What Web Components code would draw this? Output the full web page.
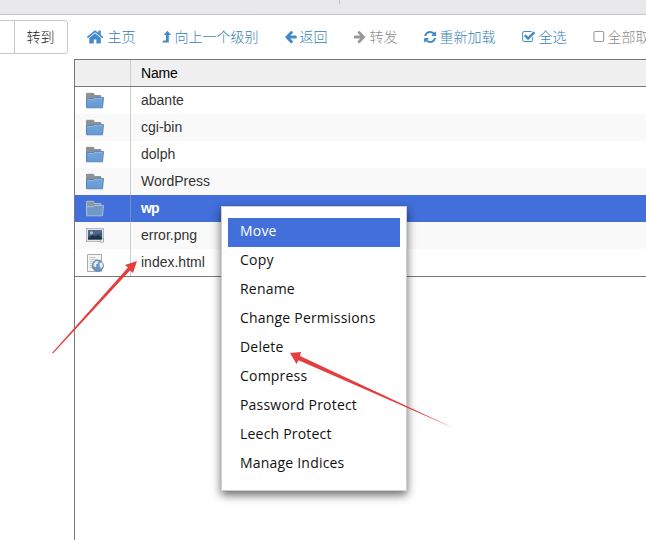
<!DOCTYPE html>
<html lang="zh-CN">
<head>
<meta charset="utf-8">
<title>File Manager</title>
<style>
html,body{margin:0;height:100%;overflow:hidden;background:#fff}
body{font-family:"Liberation Sans",Arial,"Noto Sans CJK SC",sans-serif;font-size:14px}
</style>
</head>
<body>
<file-manager></file-manager>
<script>
const define=(name,html,setup)=>customElements.define(name,class extends HTMLElement{
  connectedCallback(){
    if(this.shadowRoot)return;
    const t=document.createElement('template');
    t.innerHTML=html;
    this.attachShadow({mode:'open'}).append(t.content.cloneNode(true));
    if(setup)setup(this,this.shadowRoot);
  }
});
const fa=(d,w=14,view='0 0 1792 1792')=>`<svg width="${w}" height="${w}" viewBox="${view}"><path fill="currentColor" d="${d}"/></svg>`;
const icons={
home:fa('M1408 992v480q0 26-19 45t-45 19h-384v-384h-256v384h-384q-26 0-45-19t-19-45v-480q0-1 .5-3t.5-3l575-474 575 474q1 2 1 6zm223-69l-62 74q-8 9-21 11h-3q-13 0-21-7l-692-577-692 577q-12 8-24 7-13-2-21-11l-62-74q-8-10-7-23.5t11-21.5l719-599q32-26 76-26t76 26l244 204v-195q0-14 9-23t23-9h192q14 0 23 9t9 23v408l219 182q10 8 11 21.5t-7 23.5z',18,'30 0 1792 1792'),
up:'<svg width="10" height="14" viewBox="0 0 10 14"><path fill="currentColor" d="M0 12.600 1.500 10.600H4V5H1.700L5.400.8 9.100 5H6.800v7.600z"/></svg>',
back:fa('M1664 896v128q0 53-32.5 90.5t-84.5 37.5h-704l293 294q38 36 38 90t-38 90l-75 76q-37 37-90 37-52 0-91-37l-651-652q-37-37-37-90 0-52 37-91l651-650q38-38 91-38 52 0 90 38l75 74q38 38 38 91t-38 91l-293 293h704q52 0 84.5 37.5t32.5 90.5z',14,'160 50 1792 1792'),
forward:'<svg width="14" height="14" viewBox="160 50 1792 1792"><path fill="currentColor" transform="matrix(-1 0 0 1 1792 0)" d="M1664 896v128q0 53-32.5 90.5t-84.5 37.5h-704l293 294q38 36 38 90t-38 90l-75 76q-37 37-90 37-52 0-91-37l-651-652q-37-37-37-90 0-52 37-91l651-650q38-38 91-38 52 0 90 38l75 74q38 38 38 91t-38 91l-293 293h704q52 0 84.5 37.5t32.5 90.5z"/></svg>',
reload:fa('M1639 1056q0 5-1 7-64 268-268 434.5t-478 166.5q-146 0-282.5-55t-243.5-157l-129 129q-19 19-45 19t-45-19-19-45v-448q0-26 19-45t45-19h448q26 0 45 19t19 45-19 45l-137 137q71 66 161 102t187 36q134 0 250-65t186-179q11-17 53-117 8-23 30-23h192q13 0 22.5 9.5t9.5 22.5zm25-800v448q0 26-19 45t-45 19h-448q-26 0-45-19t-19-45 19-45l138-138q-148-137-349-137-134 0-250 65t-186 179q-11 17-53 117-8 23-30 23h-199q-13 0-22.5-9.5t-9.5-22.5v-7q65-268 270-434.5t480-166.5q146 0 284 55.5t245 156.5l130-129q19-19 45-19t45 19 19 45z',14,'110 0 1792 1792'),
check:fa('M1472 930v318q0 119-84.5 203.5t-203.5 84.5h-832q-119 0-203.5-84.5t-84.5-203.5v-832q0-119 84.5-203.5t203.5-84.5h832q63 0 117 25 15 7 18 23 3 17-9 29l-49 49q-10 10-23 10-3 0-9-2-23-6-45-6h-832q-66 0-113 47t-47 113v832q0 66 47 113t113 47h832q66 0 113-47t47-113v-254q0-13 9-22l64-64q10-10 23-10 6 0 12 3 20 8 20 29zm231-489l-814 814q-24 24-57 24t-57-24l-430-430q-24-24-24-57t24-57l110-110q24-24 57-24t57 24l263 263 647-647q24-24 57-24t57 24l110 110q24 24 24 57t-24 57z',14,'50 0 1792 1792'),
square:'<svg width="13" height="14" viewBox="0 0 13 14"><rect x=".9" y="1.5" width="9.8" height="10" rx="1.6" fill="none" stroke="currentColor" stroke-width="1.1"/></svg>'
};
const fileIcons={
folder:`<svg width="20" height="18" viewBox="0 0 20 18"><path d="M1.500 14.500V1.300h7l1 2.200h6.300v4z" fill="#8a9295" stroke="#7c868b" stroke-width=".8"/><path d="M1.600 15.800V6.700h6.700l1.400-1.200h8.800l-1 10.300z" fill="url(#f)" stroke="#557fae" stroke-width=".9"/><path d="M2.400 7.500h6.200L10 6.300h7.600" fill="none" stroke="#9bbfe6" stroke-width=".7"/><defs><linearGradient id="f" x2="0" y2="1"><stop stop-color="#76a5db"/><stop offset="1" stop-color="#6399d5"/></linearGradient></defs></svg>`,
selected:`<svg width="20" height="18" viewBox="0 0 20 18"><path d="M1.500 14.500V1.300h7l1 2.200h6.300v4z" fill="#8797a8" stroke="#b5c0cc" stroke-width=".9"/><path d="M1.600 15.800V6.700h6.700l1.400-1.200h8.800l-1 10.300z" fill="#7299c6" stroke="#a9c2de" stroke-width=".9"/></svg>`,
image:`<svg width="20" height="18" viewBox="0 0 20 18"><rect x="1.500" y="1.500" width="17" height="13" fill="#dfe3e7" stroke="#b5babf"/><rect x="3" y="3" width="14" height="9.500" fill="#3b526f"/><path d="M3 3h14v3L3 9z" fill="#4f6b8b"/><path d="M3 11.500 8 8l2 2 3-2 4 3v1.500H3z" fill="#1d3048"/><circle cx="6.500" cy="5.800" r="1.600" fill="#a8bfd2"/><path d="M18.500 11v4h-4z" fill="#fff" stroke="#8b929b" stroke-width=".7"/></svg>`,
html:`<svg width="20" height="20" viewBox="0 0 20 20"><path d="M2.500 1.500h14v17h-14z" fill="#f5f5f3" stroke="#a7abad"/><path d="M4.500 4.500h6M4.500 6.500h8M4.500 8.500h5M4.500 10.500h4M4.500 12.500h3M4.500 14.500h3" stroke="#c3c6c8"/><circle cx="12.800" cy="12.700" r="5.600" fill="#6a95c4" stroke="#6d87a5"/><path d="m8.700 10.500 2.500-2.500 2.300.5-.5 2-2 .8.500 2-1 1-2-1.400zM14.500 10l3-.8.3 4-1.800 2.600-1.400-2.500z" fill="#e8f0f5"/></svg>`
};

define('tool-action',`<style>
:host{display:flex;flex:none;align-items:center;height:20px;color:#428bca;white-space:nowrap}
:host([disabled]){color:#999}
.icon{display:flex;flex:none;width:var(--icon-width)}
svg{display:block;flex:none}
.label{font:300 14px/20px "Noto Sans CJK SC",sans-serif;color:#3a82b5;margin:-2px 0 0 -.5px;padding-right:.5px}
:host([disabled]) .label{color:#8c8c8c}
</style><span class="icon"></span><span class="label"><slot></slot></span>`,(el,root)=>{
  root.querySelector('.icon').innerHTML=icons[el.getAttribute('icon')];
  root.querySelector('.icon').style.setProperty('--icon-width',el.getAttribute('space')+'px');
});

define('go-control',`<style>
:host{display:flex;flex:none;width:68px;height:34px;box-sizing:border-box;border:1px solid #c8c8c8;border-left:0;border-radius:0 4px 4px 0;overflow:hidden}
.field{width:14px;border-right:1px solid #c8c8c8}
button{flex:1;border:0;padding:0 1px 2px 0;background:#fff;color:#222;font:300 14px/30px "Noto Sans CJK SC",sans-serif}
</style><span class="field"></span><button><slot></slot></button>`);

define('file-row',`<style>
:host{display:grid;grid-template-columns:56px 1fr;height:27px;background:#fff;color:#333}
:host(:nth-child(even)){background:#f9f9f9}
:host([selected]){background:#426fd9;color:#fff;font-weight:bold;letter-spacing:-.8px}
.icon{border-right:1px solid #ccc;padding-left:10px;display:flex;align-items:center}
:host([selected]) .icon{border-color:#718fc9}
.name{padding-left:10px;line-height:27px}
</style><span class="icon"></span><span class="name"><slot></slot></span>`,(el,root)=>{
  root.querySelector('.icon').innerHTML=fileIcons[el.getAttribute('icon')];
});

define('file-table',`<style>
:host{display:block;border-left:1px solid #777;border-top:1px solid #777;flex:1;min-width:0}
header{display:grid;grid-template-columns:56px 1fr;height:26px;background:#f0f0f0;border-bottom:1px solid #777;color:#000;line-height:26px}
header span:first-child{border-right:1px solid #ccc}
header span:last-child{padding-left:10px;letter-spacing:-.2px}
.rows{border-bottom:1px solid #777}
</style><header><span></span><span>Name</span></header><div class="rows"><slot></slot></div>`);

define('menu-item',`<style>
:host{display:block;height:29px;padding-left:12px;font:14px/26px "Open Sans",sans-serif;letter-spacing:.2px;color:#111;white-space:nowrap}
:host([active]){background:#426fd9;color:#fff}
</style><slot></slot>`);

define('context-menu',`<style>
:host{position:absolute;left:221px;top:206px;width:186px;height:285px;box-sizing:border-box;padding:11px 6px;border:1px solid #d0d0d0;background:#fff;box-shadow:0 4px 9px rgba(0,0,0,.6)}
</style><slot></slot>`);

define('pointer-arrows',`<style>
:host{position:absolute;inset:0;pointer-events:none}
svg{display:block}
</style><svg width="646" height="540"><g fill="#e53e41"><path d="m52 353 76-85.500-3-2.500 12-4-4 12-3-2.500-77 83z"/><path d="m454 428.300-155.500-68-2 3.700-6.500-11 11-1-1 4z"/></g></svg>`);

define('file-manager',`<style>
:host{display:flex;flex-direction:column;position:relative;width:646px;height:540px;overflow:hidden;background:#fff}
.top{flex:none;height:14px;border-bottom:1px solid #c5c5c7;background:#e9e9eb}
.top i{display:block;width:1px;height:4px;margin-left:339px;background:#bdbdbf}
.tools{flex:none;display:flex;height:39px;padding-top:5px}
nav{display:flex;gap:26px;padding-left:19px;padding-top:7px}
.body{flex:1;display:flex;padding-left:74px}
</style>
<div class="top"><i></i></div>
<div class="tools"><go-control>转到</go-control><nav>
<tool-action icon="home" space="21">主页</tool-action>
<tool-action icon="up" space="13">向上一个级别</tool-action>
<tool-action icon="back" space="15">返回</tool-action>
<tool-action icon="forward" space="16" disabled>转发</tool-action>
<tool-action icon="reload" space="16">重新加载</tool-action>
<tool-action icon="check" space="17">全选</tool-action>
<tool-action icon="square" space="15" disabled>全部取</tool-action>
</nav></div>
<div class="body"><file-table>
<file-row icon="folder">abante</file-row>
<file-row icon="folder">cgi-bin</file-row>
<file-row icon="folder">dolph</file-row>
<file-row icon="folder">WordPress</file-row>
<file-row icon="selected" selected>wp</file-row>
<file-row icon="image">error.png</file-row>
<file-row icon="html">index.html</file-row>
</file-table></div>
<context-menu>
<menu-item active>Move</menu-item><menu-item>Copy</menu-item><menu-item>Rename</menu-item><menu-item>Change Permissions</menu-item><menu-item>Delete</menu-item><menu-item>Compress</menu-item><menu-item>Password Protect</menu-item><menu-item>Leech Protect</menu-item><menu-item>Manage Indices</menu-item>
</context-menu>
<pointer-arrows></pointer-arrows>`);
</script>
</body>
</html>
